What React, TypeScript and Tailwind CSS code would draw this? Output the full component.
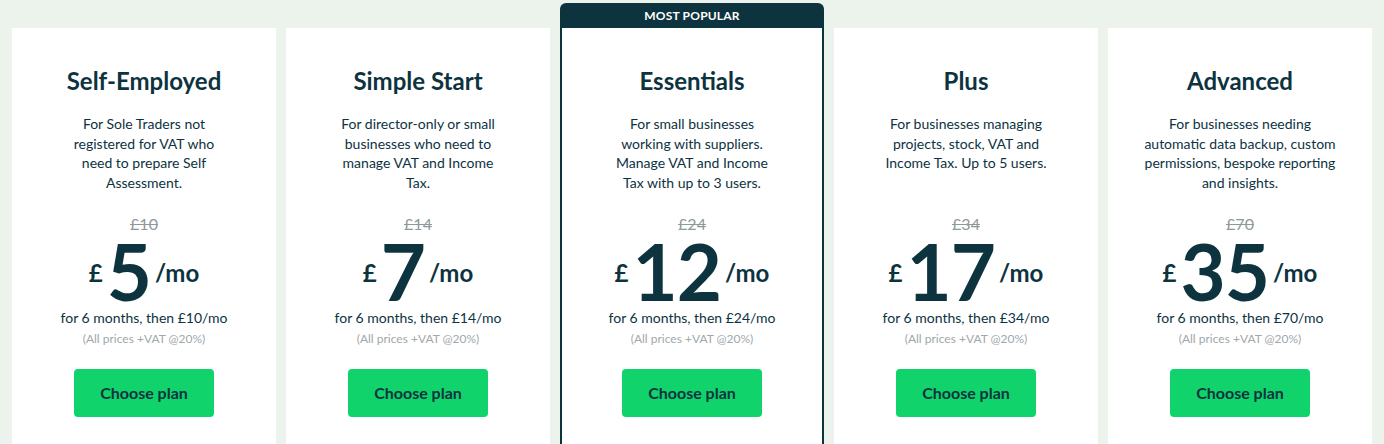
import React from "react";

type Plan = {
  name: string;
  lines: string[];
  was: string;
  price: string;
  then: string;
  popular?: boolean;
};

const plans: Plan[] = [
  {
    name: "Self-Employed",
    lines: ["For Sole Traders not", "registered for VAT who", "need to prepare Self", "Assessment."],
    was: "£10",
    price: "5",
    then: "£10/mo",
  },
  {
    name: "Simple Start",
    lines: ["For director-only or small", "businesses who need to", "manage VAT and Income", "Tax."],
    was: "£14",
    price: "7",
    then: "£14/mo",
  },
  {
    name: "Essentials",
    lines: ["For small businesses", "working with suppliers.", "Manage VAT and Income", "Tax with up to 3 users."],
    was: "£24",
    price: "12",
    then: "£24/mo",
    popular: true,
  },
  {
    name: "Plus",
    lines: ["For businesses managing", "projects, stock, VAT and", "Income Tax. Up to 5 users."],
    was: "£34",
    price: "17",
    then: "£34/mo",
  },
  {
    name: "Advanced",
    lines: ["For businesses needing", "automatic data backup, custom", "permissions, bespoke reporting", "and insights."],
    was: "£70",
    price: "35",
    then: "£70/mo",
  },
];

const PlanCard = ({ plan }: { plan: Plan }) => {
  return (
    <div className="flex flex-col w-[264px] shrink-0 min-h-[441px]">
      {plan.popular ? (
        <div className="h-[25px] shrink-0 bg-[#0d333f] rounded-t-[6px] flex items-center justify-center text-white text-[12px] leading-none font-bold tracking-[0.2px]">
          MOST POPULAR
        </div>
      ) : (
        <div className="h-[25px] shrink-0" />
      )}
      <div
        className={
          plan.popular
            ? "flex-1 bg-white border-x-2 border-[#0d333f] flex flex-col items-center pt-[38px] pb-[40px]"
            : "flex-1 bg-white flex flex-col items-center pt-[38px] pb-[40px]"
        }
      >
        <h2 className="text-[24px] leading-[30px] font-bold text-[#0d333f]">{plan.name}</h2>
        <p className="mt-[18px] min-h-[80px] text-[14px] leading-[19.7px] text-[#0d333f] text-center">
          {plan.lines.map((l, i) => (
            <span key={i} className="block">
              {l}
            </span>
          ))}
        </p>
        <div className="mt-[18px] text-[16px] leading-[24px] text-[#8d999b] line-through">{plan.was}</div>
        <div className="flex items-start justify-center h-[72px] shrink-0 text-[#0d333f] font-bold">
          <span className="text-[24px] leading-[24px] mt-[25px]">£</span>
          <span className="text-[78px] leading-[70px] mx-[4px] tracking-[-1px]">{plan.price}</span>
          <span className="text-[24px] leading-[24px] mt-[25px]">/mo</span>
        </div>
        <div className="text-[14px] leading-[20px] text-[#0d333f]">for 6 months, then {plan.then}</div>
        <div className="mt-[3px] text-[12px] leading-[16px] text-[#a0a8ab]">(All prices +VAT @20%)</div>
        <button className="mt-[22px] w-[140px] h-[48px] shrink-0 rounded-[4px] bg-[#10d36c] text-[16px] font-bold text-[#0d333f]">
          Choose plan
        </button>
      </div>
    </div>
  );
};

export default function App() {
  return (
    <div
      className="h-[444px] overflow-hidden bg-[#ecf2ec] flex items-start gap-[10px] px-[12px] pt-[3px]"
      style={{ fontFamily: "Lato, 'Noto Sans', sans-serif" }}
    >
      {plans.map((p) => (
        <PlanCard key={p.name} plan={p} />
      ))}
    </div>
  );
}
